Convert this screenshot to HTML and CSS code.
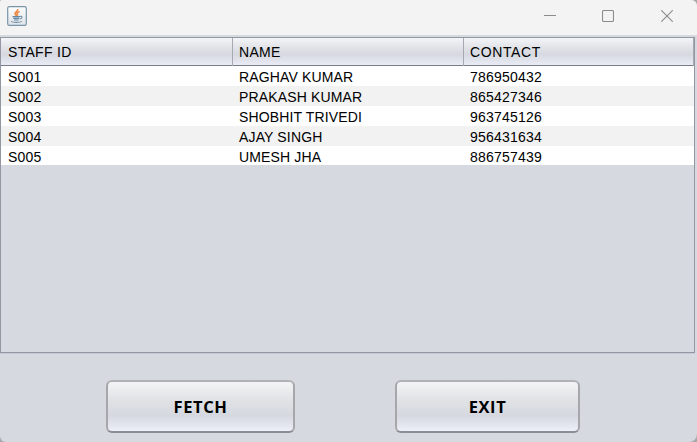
FILE: index.html
```html
<!DOCTYPE html>
<html lang="en">
<head>
<meta charset="utf-8">
<title>Staff</title>
<link rel="stylesheet" href="styles.css">
</head>
<body>
<div class="window">
  <header class="titlebar">
    <svg class="app-icon" width="20" height="20" viewBox="0 0 20 20" fill="none">
      <defs><linearGradient id="tile" x1="0" y1="0" x2="0" y2="1"><stop offset="0" stop-color="#fdfdfd"/><stop offset="1" stop-color="#dfe3e7"/></linearGradient></defs>
      <rect x=".7" y=".7" width="18.6" height="18.6" rx="1.6" fill="url(#tile)" stroke="#7895aa" stroke-width="1.2"/>
      <path d="M10.8 3C11.3 5.2 7.2 6 8.1 8.1L9.6 10M12.6 5.4C9.4 6.6 9.7 7.6 10.5 8.6L10 10" stroke="#ed8a45" stroke-width="1.6"/>
      <path d="M5.6 10.6H13M6.2 12.4H12.2M7 14H11.6" stroke="#6286a4" stroke-width="1.1"/>
      <path d="M13 10.4C16 9.6 15.6 12.6 12.6 13M4 15.4C6 16.8 13 16.6 14.8 15.4" stroke="#7291ab" stroke-width="1.1"/>
    </svg>
    <div class="controls">
      <svg width="12" height="12" viewBox="0 0 12 12"><path d="M0 5.5H12"/></svg>
      <svg width="12" height="12" viewBox="0 0 12 12"><rect x=".5" y=".5" width="11" height="11" rx="1.3"/></svg>
      <svg width="12" height="12" viewBox="0 0 12 12"><path d="M.3.3L11.7 11.7M11.7.3L.3 11.7"/></svg>
    </div>
  </header>
  <main class="table-pane">
    <div class="row head"><span>STAFF ID</span><span>NAME</span><span>CONTACT</span></div>
    <div class="row"><span>S001</span><span>RAGHAV KUMAR</span><span>786950432</span></div>
    <div class="row"><span>S002</span><span>PRAKASH KUMAR</span><span>865427346</span></div>
    <div class="row"><span>S003</span><span>SHOBHIT TRIVEDI</span><span>963745126</span></div>
    <div class="row"><span>S004</span><span>AJAY SINGH</span><span>956431634</span></div>
    <div class="row last"><span>S005</span><span>UMESH JHA</span><span>886757439</span></div>
  </main>
  <footer class="actions">
    <button class="btn fetch" type="button">FETCH</button>
    <button class="btn exit" type="button">EXIT</button>
  </footer>
</div>
</body>
</html>
```
FILE: styles.css
```css
* { box-sizing: border-box; }
body { margin: 0; background: #a9a9a9; }
.window {
  width: 697px;
  height: 442px;
  display: flex;
  flex-direction: column;
  overflow: hidden;
  background: #d6d9e0;
  border-radius: 2px 6px 8px 6px;
  font-family: "Liberation Sans", Arial, sans-serif;
  color: #000;
}
.titlebar {
  height: 35px;
  flex: none;
  display: flex;
  justify-content: space-between;
  padding: 6px 24px 0 7px;
  background: #f3f3f3;
}
.controls { display: flex; gap: 47px; padding-top: 4px; }
.controls svg { fill: none; stroke: #8b8b8b; stroke-width: 1.1; }
.controls svg:first-child { margin-right: -1px; }
.table-pane {
  width: 695px;
  height: 316px;
  flex: none;
  margin-top: 2px;
  border: 1px solid #9297a1;
  box-shadow: 0 1px 0 #c6c9d1;
}
.row {
  display: grid;
  grid-template-columns: 232px 231px 1fr;
  height: 20px;
  background: #fff;
  font-size: 14px;
  line-height: 22px;
  letter-spacing: .2px;
}
.row:nth-child(odd) { background: #f2f2f2; }
.row:nth-child(even) { background: #fff; }
.row.last { height: 19px; }
.row span { padding-left: 7px; white-space: nowrap; }
.row span + span { padding-left: 6px; }
.row:not(.head) span:nth-child(2) { letter-spacing: .15px; }
.row.head {
  height: 28px;
  background: linear-gradient(#f4f5f8 0%, #e1e3e8 35%, #d6d9df 60%, #dfe2ea 80%, #e9ecf4 100%);
  border-bottom: 1px solid #797c87;
  line-height: 28px;
  letter-spacing: .3px;
}
.row.head span { border-right: 1px solid #a6a9b2; }
.row.head span:last-child { letter-spacing: .6px; }
.actions { display: flex; padding: 27px 0 0 106px; gap: 100px; }
.btn {
  height: 53px;
  padding: 0;
  border: 2px solid;
  border-color: #b0b2b5 #a5a7ab #8b8e92 #a5a7ab;
  border-radius: 6px;
  background: linear-gradient(#f3f4f5 0%, #e1e3e6 35%, #d5d8df 68%, #e1e4ec 85%, #edf0f8 100%);
  font: bold 16.5px/49px "Open Sans", "Noto Sans", sans-serif;
  letter-spacing: .6px;
  color: #000;
}
.fetch { width: 189px; }
.exit { width: 185px; }
```
